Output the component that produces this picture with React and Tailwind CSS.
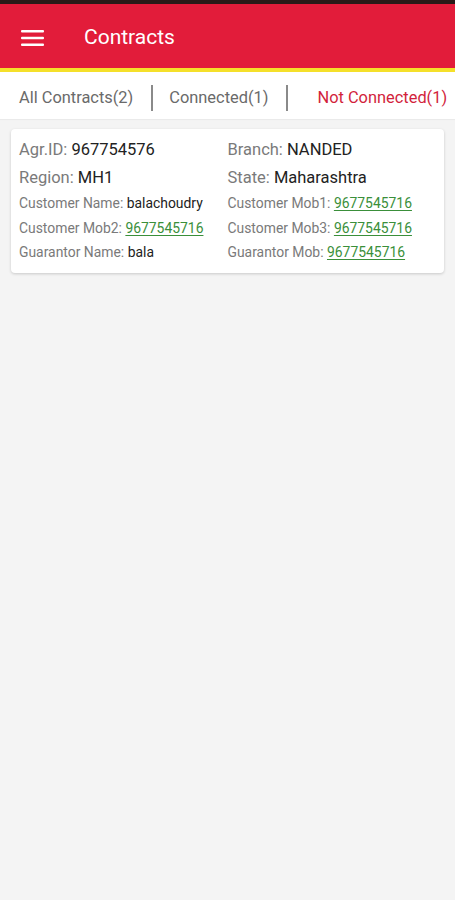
import React from "react";

const Label = ({ children }) => <span className="text-[#7a7a7a]">{children}</span>;
const Val = ({ children }) => <span className="text-[#222]">{children}</span>;
const Link = ({ children }) => (
  <span className="text-[#3a8f3a] underline underline-offset-2">{children}</span>
);

export default function App() {
  return (
    <div
      className="w-[455px] h-[900px] bg-[#f4f4f4] flex flex-col"
      style={{ fontFamily: "Roboto, 'Noto Sans', sans-serif" }}
    >
      <div className="h-[4px] bg-[#2a1a18]" />
      <div className="h-[64px] bg-[#e21c3a] flex items-center pt-[3px]">
        <svg width="24" height="18" viewBox="0 0 24 18" className="ml-[21px]">
          <rect x="0" y="1" width="23" height="2.6" rx="1" fill="#fff" />
          <rect x="0" y="7.7" width="23" height="2.6" rx="1" fill="#fff" />
          <rect x="0" y="14.4" width="23" height="2.6" rx="1" fill="#fff" />
        </svg>
        <span className="ml-[39px] text-white text-[21px]">Contracts</span>
      </div>
      <div className="h-[4px] bg-[#f5e02a]" />
      <div className="h-[47px] bg-white flex items-center pt-[5px] text-[16.4px] shadow-[0_1px_1px_rgba(0,0,0,0.04)]">
        <span className="ml-[19px] text-[#6a6a6a]">All Contracts(2)</span>
        <div className="ml-[18px] w-[2px] h-[26px] bg-[#8a8a8a]" />
        <span className="ml-[16px] text-[#6a6a6a]">Connected(1)</span>
        <div className="ml-[18px] w-[2px] h-[26px] bg-[#8a8a8a]" />
        <span className="ml-[29px] text-[#d21f3c] whitespace-nowrap">Not Connected(1)</span>
      </div>
      <div className="mt-[10px] mx-[11px] bg-white rounded-[4px] shadow-[0_1px_3px_rgba(0,0,0,0.18)] px-[8px] pt-[11px] pb-[12px] grid grid-cols-2">
        <div className="text-[16.5px] leading-[20px] h-[28px]"><Label>Agr.ID: </Label><Val>967754576</Val></div>
        <div className="text-[16.5px] leading-[20px] h-[28px]"><Label>Branch: </Label><Val>NANDED</Val></div>
        <div className="text-[16.5px] leading-[20px] h-[26px]"><Label>Region: </Label><Val>MH1</Val></div>
        <div className="text-[16.5px] leading-[20px] h-[26px]"><Label>State: </Label><Val>Maharashtra</Val></div>
        <div className="text-[13.9px] leading-[18px] h-[25px] whitespace-nowrap"><Label>Customer Name: </Label><Val>balachoudry</Val></div>
        <div className="text-[13.9px] leading-[18px] h-[25px] whitespace-nowrap"><Label>Customer Mob1: </Label><Link>9677545716</Link></div>
        <div className="text-[13.9px] leading-[18px] h-[24px] whitespace-nowrap"><Label>Customer Mob2: </Label><Link>9677545716</Link></div>
        <div className="text-[13.9px] leading-[18px] h-[24px] whitespace-nowrap"><Label>Customer Mob3: </Label><Link>9677545716</Link></div>
        <div className="text-[13.9px] leading-[18px] whitespace-nowrap"><Label>Guarantor Name: </Label><Val>bala</Val></div>
        <div className="text-[13.9px] leading-[18px] whitespace-nowrap"><Label>Guarantor Mob: </Label><Link>9677545716</Link></div>
      </div>
    </div>
  );
}
